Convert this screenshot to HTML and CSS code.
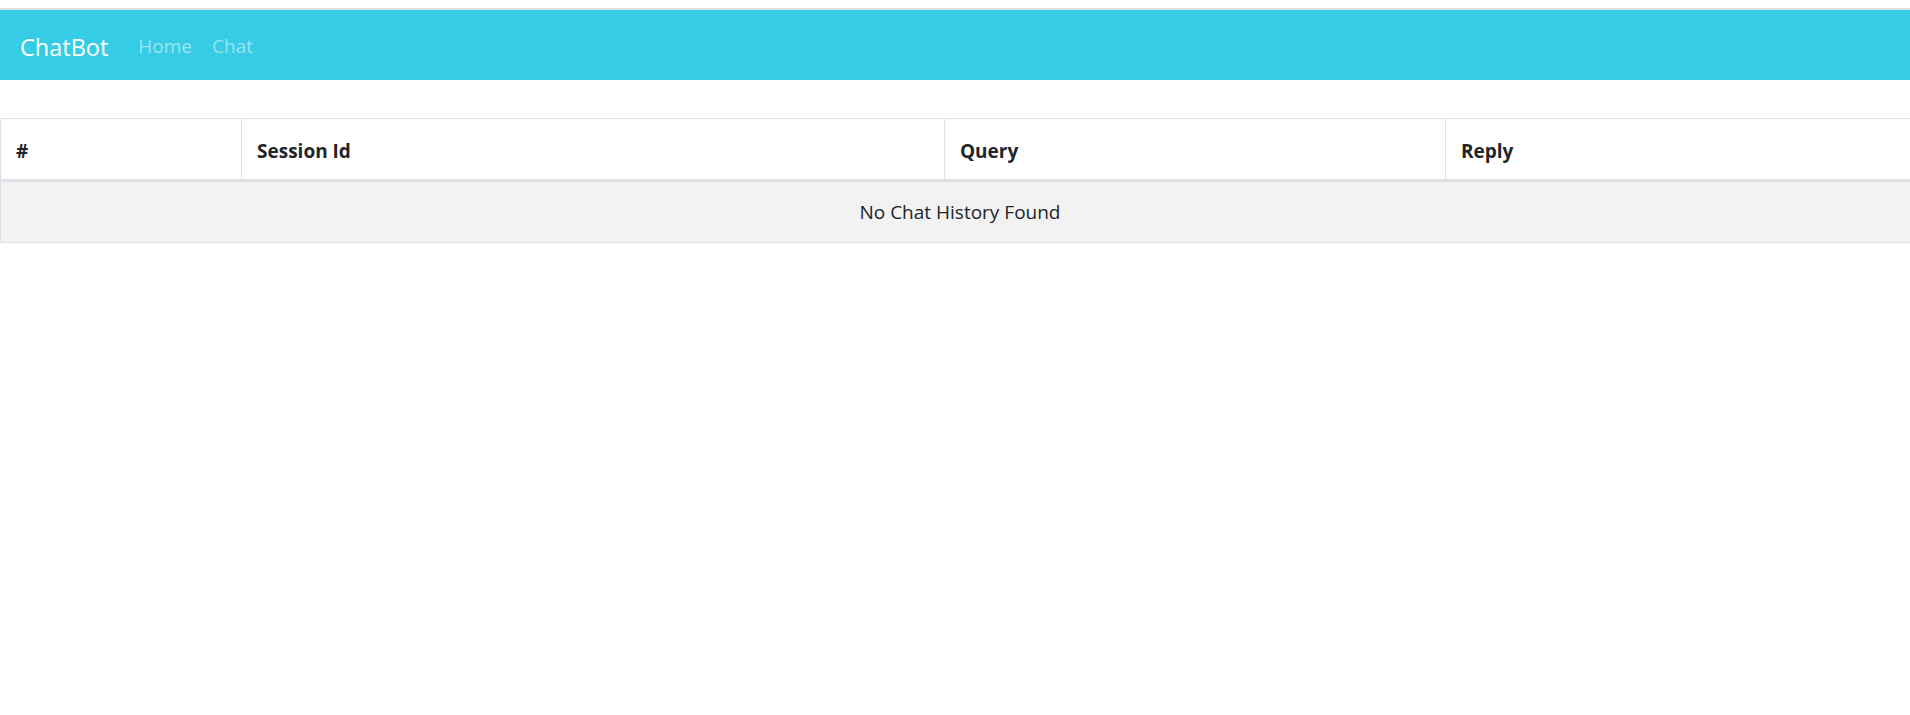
FILE: index.html
```html
<!DOCTYPE html>
<html lang="en">
<head>
<meta charset="utf-8">
<title>ChatBot</title>
<link rel="stylesheet" href="styles.css">
</head>
<body>
<header class="topline">
  <nav class="navbar">
    <a class="brand" href="#">ChatBot</a>
    <ul class="nav">
      <li><a class="nav-link" href="#">Home</a></li>
      <li><a class="nav-link" href="#">Chat</a></li>
    </ul>
  </nav>
</header>
<main class="content">
  <table class="history">
    <colgroup>
      <col class="c1"><col class="c2"><col class="c3"><col class="c4">
    </colgroup>
    <thead>
      <tr><th>#</th><th>Session Id</th><th>Query</th><th>Reply</th></tr>
    </thead>
    <tbody>
      <tr class="striped"><td colspan="4" class="empty">No Chat History Found</td></tr>
    </tbody>
  </table>
</main>
</body>
</html>
```

FILE: styles.css
```css
html, body {
  margin: 0;
  padding: 0;
  overflow-x: hidden;
  background: #fff;
}
body {
  font-family: "Open Sans", "Noto Sans", "Liberation Sans", sans-serif;
  font-size: 19px;
  color: #212529;
}
.topline {
  margin-top: 8px;
  border-top: 2px solid #dcdde3;
}
.navbar {
  height: 70px;
  background: #36cce5;
  display: flex;
  align-items: center;
  padding: 0 20px;
}
.brand {
  color: #fff;
  text-decoration: none;
  font-size: 23.5px;
  line-height: 1.5;
  margin-right: 20px;
  padding-top: 5px;
}
.nav {
  list-style: none;
  margin: 0;
  padding: 0;
  display: flex;
}
.nav-link {
  display: block;
  padding: 2px 10px 0;
  color: rgba(255, 255, 255, 0.5);
  text-decoration: none;
  font-size: 19px;
  line-height: 1.5;
}
.content {
  margin-top: 38px;
}
.history {
  width: 1920px;
  border-collapse: collapse;
  table-layout: fixed;
}
.c1 { width: 241px; }
.c2 { width: 703px; }
.c3 { width: 501px; }
.history th, .history td {
  border: 1px solid #dee2e6;
  padding: 15px;
  line-height: 30px;
  text-align: left;
  vertical-align: top;
}
.history th {
  font-weight: 700;
  padding-top: 17px;
  padding-bottom: 13px;
  border-bottom: 3px solid #dee2e6;
}
.striped td {
  background: #f2f2f2;
}
.history td.empty {
  text-align: center;
}
```
